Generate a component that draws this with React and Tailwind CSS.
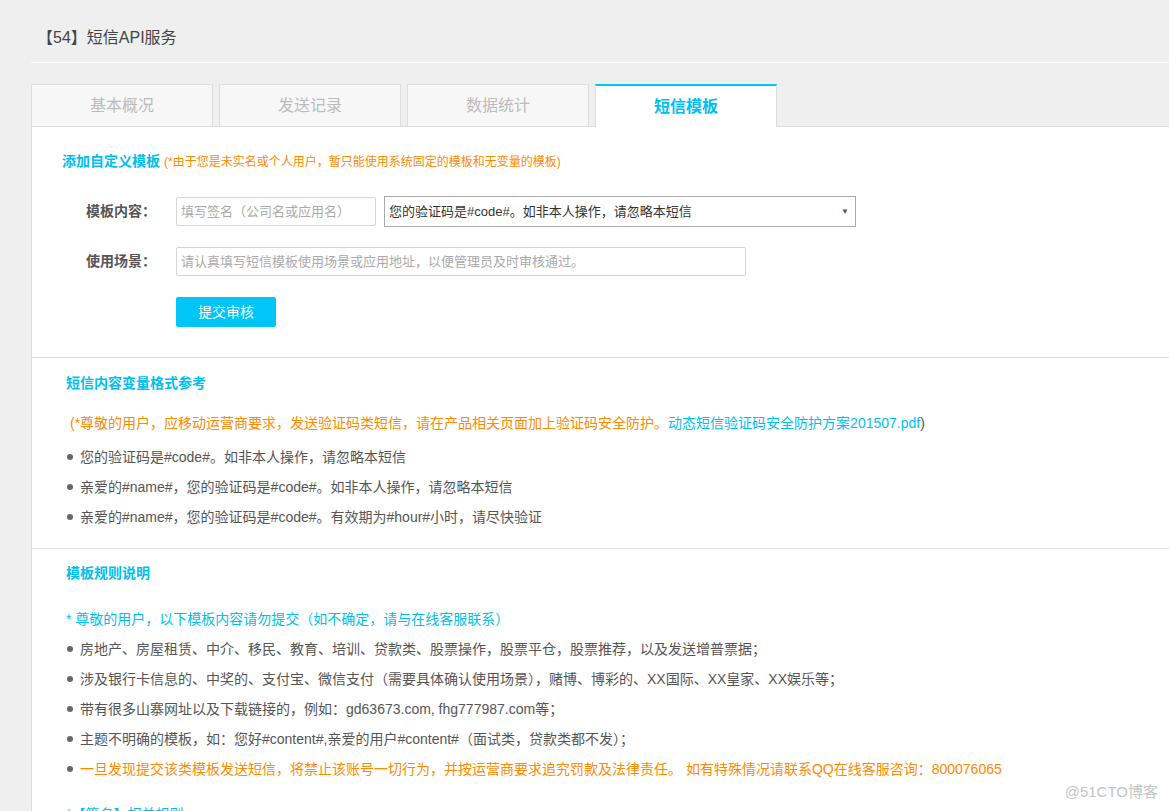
const font = { fontFamily: '"Liberation Sans", "Noto Sans CJK SC", sans-serif' };

const tabs = ['基本概况', '发送记录', '数据统计', '短信模板'];

const varSamples = [
  '您的验证码是#code#。如非本人操作，请忽略本短信',
  '亲爱的#name#，您的验证码是#code#。如非本人操作，请忽略本短信',
  '亲爱的#name#，您的验证码是#code#。有效期为#hour#小时，请尽快验证',
];

const rules = [
  '房地产、房屋租赁、中介、移民、教育、培训、贷款类、股票操作，股票平仓，股票推荐，以及发送增普票据；',
  '涉及银行卡信息的、中奖的、支付宝、微信支付（需要具体确认使用场景），赌博、博彩的、XX国际、XX皇家、XX娱乐等；',
  '带有很多山寨网址以及下载链接的，例如：gd63673.com, fhg777987.com等；',
  '主题不明确的模板，如：您好#content#,亲爱的用户#content#（面试类，贷款类都不发）；',
];

function Bullet({ children, className = 'text-[#555]' }) {
  return (
    <li className={`flex h-[30px] items-center text-[14px] ${className}`}>
      <span className="mr-[7px] ml-[1px] h-[6px] w-[6px] shrink-0 rounded-full bg-[#666]" />
      <span className="whitespace-nowrap">{children}</span>
    </li>
  );
}

export default function App() {
  return (
    <div className="relative h-[811px] w-[1169px] overflow-hidden bg-[#efefef]" style={font}>
      {/* page title */}
      <div className="ml-[31px] border-b border-white pt-[27px] pb-[13px]">
        <h1 className="pl-[6px] text-[16px] leading-[22px] text-[#444]">【54】短信API服务</h1>
      </div>

      {/* tabs */}
      <div className="mt-[21px] ml-[31px] flex gap-[6px] border-b border-[#ddd]">
        {tabs.map((t, i) =>
          i === 3 ? (
            <div
              key={t}
              className="-mb-px flex h-[43px] w-[182px] items-center justify-center border-x border-t-2 border-x-[#ddd] border-t-[#00c5f5] bg-white text-[16px] font-bold text-[#00bff0]"
            >
              {t}
            </div>
          ) : (
            <div
              key={t}
              className="flex h-[42px] w-[182px] items-center justify-center border-x border-t border-[#ddd] bg-[#f7f7f7] text-[16px] text-[#bbb]"
            >
              {t}
            </div>
          )
        )}
      </div>

      {/* content panel */}
      <div className="ml-[31px] border-l border-[#ddd] bg-white">
        {/* add template */}
        <section className="pt-[26px] pb-[30px]">
          <p className="flex items-baseline pl-[30px] leading-[16px] whitespace-nowrap">
            <span className="text-[14px] font-bold text-[#00bff0]">添加自定义模板</span>
            <span className="ml-[4px] text-[12px] text-[#ff8a00]">(*由于您是未实名或个人用户，暂只能使用系统固定的模板和无变量的模板)</span>
          </p>

          <div className="mt-[26px] flex items-center pl-[54px]">
            <label className="w-[90px] text-[14px] font-bold text-[#555]">模板内容：</label>
            <div className="flex h-[29px] w-[200px] items-center rounded-[2px] border border-[#d5d5d5] px-[4px] text-[13px] text-[#aaa]">
              填写签名（公司名或应用名）
            </div>
            <div className="ml-[8px] flex h-[31px] w-[472px] items-center justify-between border border-[#aaa] pr-[6px] pl-[4px] text-[13px] text-[#333]">
              <span>您的验证码是#code#。如非本人操作，请忽略本短信</span>
              <span className="text-[8px] text-[#555]">▼</span>
            </div>
          </div>

          <div className="mt-[20px] flex items-center pl-[54px]">
            <label className="w-[90px] text-[14px] font-bold text-[#555]">使用场景：</label>
            <div className="flex h-[29px] w-[570px] items-center rounded-[2px] border border-[#d5d5d5] px-[4px] text-[13px] text-[#aaa]">
              请认真填写短信模板使用场景或应用地址，以便管理员及时审核通过。
            </div>
          </div>

          <div className="mt-[21px] pl-[144px]">
            <button className="h-[30px] w-[100px] rounded-[2px] bg-[#00c5f7] text-[14px] text-white">提交审核</button>
          </div>
        </section>

        {/* variable format */}
        <section className="border-t border-[#ddd] pt-[17px] pb-[16px]">
          <h2 className="pl-[34px] text-[14px] leading-[16px] font-bold text-[#00bff0]">短信内容变量格式参考</h2>
          <p className="mt-[24px] pl-[38px] text-[14px] leading-[16px] whitespace-nowrap">
            <span className="text-[#ff8a00]">(*尊敬的用户，应移动运营商要求，发送验证码类短信，请在产品相关页面加上验证码安全防护。</span>
            <span className="text-[#00bff0]">动态短信验证码安全防护方案201507.pdf</span>
            <span className="text-[#555]">)</span>
          </p>
          <ul className="mt-[11px] pl-[34px]">
            {varSamples.map((s) => (
              <Bullet key={s}>{s}</Bullet>
            ))}
          </ul>
        </section>

        {/* rules */}
        <section className="border-t border-[#ddd] pt-[16px] pb-[20px]">
          <h2 className="pl-[34px] text-[14px] leading-[16px] font-bold text-[#00bff0]">模板规则说明</h2>
          <p className="mt-[26px] pl-[34px] text-[14px] leading-[24px] text-[#00bff0]">
            * 尊敬的用户，以下模板内容请勿提交（如不确定，请与在线客服联系）
          </p>
          <ul className="mt-[3px] pl-[34px]">
            {rules.map((r) => (
              <Bullet key={r}>{r}</Bullet>
            ))}
            <Bullet className="text-[#ff8a00]">
              一旦发现提交该类模板发送短信，将禁止该账号一切行为，并按运营商要求追究罚款及法律责任。 如有特殊情况请联系QQ在线客服咨询：800076065
            </Bullet>
          </ul>
          <p className="mt-[18px] pl-[34px] text-[14px] leading-[24px] text-[#00bff0]">*【签名】相关规则</p>
        </section>
      </div>

      <div className="absolute right-[11px] bottom-[8px] text-[15px] text-[#c4c4c4]">@51CTO博客</div>
    </div>
  );
}
